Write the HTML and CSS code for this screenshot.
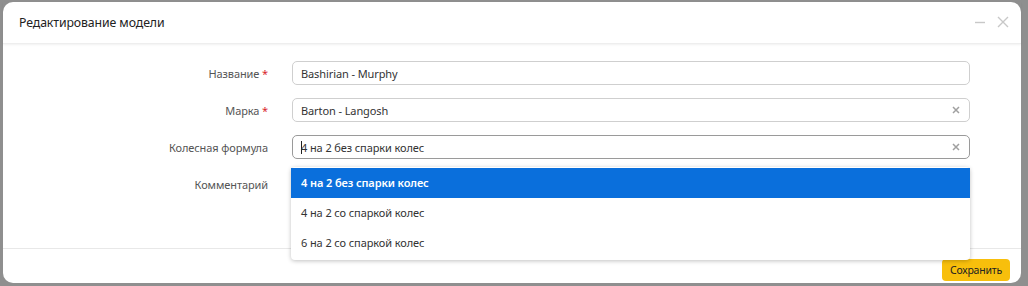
FILE: index.html
```html
<!DOCTYPE html>
<html lang="ru">
  <head>
    <meta charset="UTF-8" />
    <title>Редактирование модели</title>
    <link rel="stylesheet" href="styles.css">
  </head>
  <body>
    <div class="modal">
      <div class="modal-header">
        <div class="modal-title">Редактирование модели</div>
        <div class="modal-tools">
          <svg class="tool" width="12" height="12" viewBox="0 0 12 12"><path d="M1 6.5h10" stroke="#c8c8c8" stroke-width="1.4"/></svg>
          <svg class="tool" width="12" height="12" viewBox="0 0 12 12"><path d="M1 1l10 10M11 1L1 11" stroke="#c8c8c8" stroke-width="1.4"/></svg>
        </div>
      </div>

      <div class="modal-body">
        <div class="row">
          <label class="label">Название <span class="req">*</span></label>
          <div class="field">
            <div class="input">Bashirian - Murphy</div>
          </div>
        </div>
        <div class="row">
          <label class="label">Марка <span class="req">*</span></label>
          <div class="field">
            <div class="input">Barton - Langosh
              <svg class="clear" width="8" height="8" viewBox="0 0 8 8"><path d="M1 1l6 6M7 1L1 7" stroke="#a0a0a0" stroke-width="1.5"/></svg>
            </div>
          </div>
        </div>
        <div class="row">
          <label class="label">Колесная формула</label>
          <div class="field">
            <div class="input focused"><span class="caret"></span>4 на 2 без спарки колес
              <svg class="clear" width="8" height="8" viewBox="0 0 8 8"><path d="M1 1l6 6M7 1L1 7" stroke="#a0a0a0" stroke-width="1.5"/></svg>
            </div>
            <ul class="dropdown">
              <li class="active">4 на 2 без спарки колес</li>
              <li>4 на 2 со спаркой колес</li>
              <li>6 на 2 со спаркой колес</li>
            </ul>
          </div>
        </div>
        <div class="row">
          <label class="label">Комментарий</label>
          <div class="field">
            <div class="textarea"></div>
          </div>
        </div>
      </div>

      <div class="modal-footer">
        <button class="btn-save">Сохранить</button>
      </div>
    </div>
  </body>
</html>
```

FILE: styles.css
```css
* {
  margin: 0;
  padding: 0;
  box-sizing: border-box;
}

body {
  background-color: #8f8f8f;
  font-family: "Noto Sans", "Open Sans", sans-serif;
  font-size: 11px;
  letter-spacing: -0.1px;
  color: #333;
  overflow: hidden;
  height: 286px;
}

.modal {
  background-color: #fff;
  margin: 2px 7px 0 3px;
  border-radius: 10px;
  height: 281px;
}

.modal-header {
  display: flex;
  justify-content: space-between;
  align-items: center;
  height: 42px;
  padding: 0 12px 0 16px;
  box-shadow: 0 1px 2px rgba(0, 0, 0, 0.06);
  border-bottom: 1px solid #eee;
}

.modal-title {
  font-size: 12.3px;
  color: #222;
}

.modal-tools {
  display: flex;
  gap: 11px;
  margin-top: -2px;
}

.modal-body {
  padding: 17px 51px 0 0;
  height: 204px;
}

.row {
  display: grid;
  grid-template-columns: 265px 1fr;
  column-gap: 24px;
  align-items: center;
  margin-bottom: 13px;
}

.label {
  text-align: right;
  color: #555;
}

.req {
  color: #d9262b;
}

.field {
  position: relative;
}

.input {
  display: flex;
  align-items: center;
  height: 24px;
  border: 1px solid #cfcfcf;
  border-radius: 5px;
  padding: 0 8px;
  color: #333;
}

.input.focused {
  border-color: #9a9a9a;
}

.caret {
  width: 1px;
  height: 13px;
  background-color: #222;
  margin-right: -1px;
}

.clear {
  margin-left: auto;
  margin-right: 1px;
}

.textarea {
  height: 24px;
}

.dropdown {
  list-style: none;
  position: absolute;
  top: 32px;
  left: -1px;
  right: 0;
  background-color: #fff;
  border-radius: 4px;
  box-shadow: 0 1px 4px rgba(0, 0, 0, 0.25);
  padding: 1px 0 2px;
  z-index: 5;
}

.dropdown li {
  height: 30px;
  line-height: 30px;
  padding-left: 10px;
  color: #333;
}

.dropdown li.active {
  background-color: #0a6fdc;
  color: #fff;
  font-weight: 600;
}

.modal-footer {
  display: flex;
  justify-content: flex-end;
  border-top: 1px solid #e8e8e8;
  padding: 10px 11px 0 0;
}

.btn-save {
  background-color: #f8bf0c;
  border: none;
  border-radius: 4px;
  font-family: "Noto Sans", "Open Sans", sans-serif;
  font-size: 10.5px;
  letter-spacing: -0.2px;
  color: #222;
  height: 22px;
  padding: 0 8px;
}
```
